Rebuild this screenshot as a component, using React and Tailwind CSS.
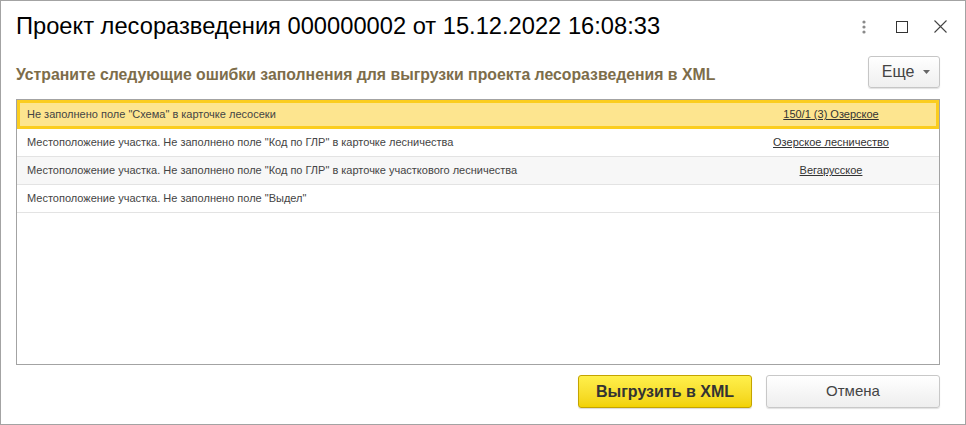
import React from "react";

const rows = [
  { text: 'Не заполнено поле "Схема" в карточке лесосеки', link: "150/1 (3) Озерское", selected: true },
  { text: 'Местоположение участка. Не заполнено поле "Код по ГЛР" в карточке лесничества', link: "Озерское лесничество" },
  { text: 'Местоположение участка. Не заполнено поле "Код по ГЛР" в карточке участкового лесничества', link: "Вегарусское", alt: true },
  { text: 'Местоположение участка. Не заполнено поле "Выдел"', link: "" },
];

const App = () => {
  return (
    <div
      className="w-[966px] h-[425px] bg-white border border-[#a3a3a3] flex flex-col overflow-hidden"
      style={{ fontFamily: '"Liberation Sans", Arial, sans-serif' }}
    >
      {/* Заголовок окна */}
      <div className="flex items-center h-[51px] pl-[15px] pr-[18px]">
        <h1 className="text-[23.7px] text-black leading-none flex-1 whitespace-nowrap">
          Проект лесоразведения 000000002 от 15.12.2022 16:08:33
        </h1>
        <div className="flex items-center">
          <svg width="6" height="14" viewBox="0 0 6 14" className="mr-[29px]">
            <circle cx="3" cy="2" r="1.6" fill="#8a8a8a" />
            <circle cx="3" cy="7" r="1.6" fill="#8a8a8a" />
            <circle cx="3" cy="12" r="1.6" fill="#8a8a8a" />
          </svg>
          <svg width="12" height="12" viewBox="0 0 12 12" className="mr-[26px]">
            <rect x="0.5" y="0.5" width="11" height="11" fill="none" stroke="#333" strokeWidth="1" />
          </svg>
          <svg width="13" height="13" viewBox="0 0 13 13">
            <path d="M0.5 0.5 L12.5 12.5 M12.5 0.5 L0.5 12.5" stroke="#444" strokeWidth="1.1" />
          </svg>
        </div>
      </div>

      {/* Подзаголовок и кнопка Еще */}
      <div className="flex items-center h-[36px] pl-[15px] pr-[25px] mt-[2px]">
        <p className="flex-1 text-[15.8px] font-bold text-[#7d6d4a] pt-[5px] whitespace-nowrap">
          Устраните следующие ошибки заполнения для выгрузки проекта лесоразведения в XML
        </p>
        <button className="w-[72px] h-[32px] rounded-[3px] border border-[#c6c6c6] bg-gradient-to-b from-white to-[#efefef] shadow-[0_1px_1px_rgba(0,0,0,0.12)] flex items-center justify-center gap-[9px] text-[16px] text-[#444] pl-[4px]">
          <span>Еще</span>
          <svg width="7" height="4" viewBox="0 0 7 4">
            <path d="M0 0 L7 0 L3.5 4 Z" fill="#666" />
          </svg>
        </button>
      </div>

      {/* Таблица ошибок */}
      <div className="ml-[15px] mr-[25px] mt-[9px] h-[266px] border border-[#a3a3a3] text-[11px] text-[#444]">
        {rows.map((row, i) => (
          <div
            key={i}
            className={
              row.selected
                ? "flex items-center h-[29px] border-[3px] border-[#fbcd1f] bg-[#fde58f]"
                : "flex items-center h-[28px] border-b border-[#e3e3e3] " + (row.alt ? "bg-[#f7f7f7]" : "bg-white")
            }
          >
            <div className={row.selected ? "flex-1 pl-[7px] whitespace-nowrap" : "flex-1 pl-[10px] whitespace-nowrap"}>
              {row.text}
            </div>
            <div className={row.selected ? "w-[210px] text-center underline text-[#333]" : "w-[216px] text-center underline text-[#333]"}>
              {row.link}
            </div>
          </div>
        ))}
      </div>

      {/* Кнопки */}
      <div className="flex justify-end gap-[14px] pr-[25px] mt-[10px]">
        <button className="w-[174px] h-[33px] rounded-[3px] border border-[#c4a400] bg-gradient-to-b from-[#fff04a] to-[#f2d200] shadow-[0_1px_1px_rgba(0,0,0,0.15)] text-[16px] font-bold text-[#333]">
          Выгрузить в XML
        </button>
        <button className="w-[174px] h-[33px] rounded-[3px] border border-[#c8c8c8] bg-gradient-to-b from-white to-[#eeeeee] shadow-[0_1px_1px_rgba(0,0,0,0.12)] text-[15px] text-[#444]">
          Отмена
        </button>
      </div>
    </div>
  );
};

export default App;
